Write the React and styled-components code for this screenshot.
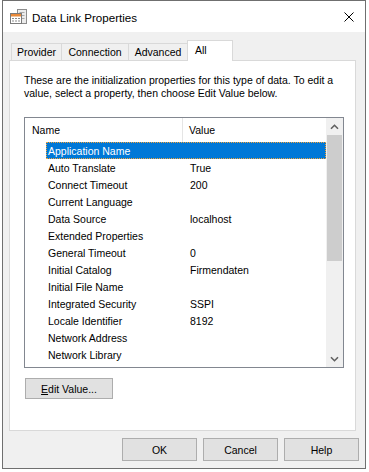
import styled, { createGlobalStyle } from "styled-components"

const GlobalStyle = createGlobalStyle`
    html, body {
        margin: 0;
        padding: 0;
        background: #ffffff;
    }
    body {
        font-family: "Liberation Sans", Arial, sans-serif;
        font-size: 10.5px;
        color: #000000;
    }
`

const Window = styled.div`
    margin-left: 2px;
    width: 364px;
    height: 469px;
    box-sizing: border-box;
    border: 1px solid #6f6f6f;
    display: flex;
    flex-direction: column;
`
const TitleBar = styled.div`
    height: 31px;
    flex: none;
    background: #ffffff;
    display: flex;
    align-items: center;
    gap: 4px;
    padding: 0 11px 0 7px;
`
const Title = styled.div`
    flex: 1;
    font-size: 11.6px;
    padding-top: 1px;
`
const Content = styled.div`
    flex: 1;
    background: #f0f0f0;
    padding: 8px 0 0 6px;
    display: flex;
    flex-direction: column;
`
const TabStrip = styled.div`
    display: flex;
    align-items: flex-end;
    height: 20px;
    padding-left: 2px;
`
const Tab = styled.div`
    position: relative;
    box-sizing: border-box;
    width: ${(p) => p.$width}px;
    height: ${(p) => (p.$selected ? 21 : 17)}px;
    margin-left: ${(p) => (p.$first ? 0 : -1)}px;
    margin-bottom: ${(p) => (p.$selected ? -1 : 0)}px;
    border: 1px solid #d9d9d9;
    border-bottom: none;
    background: ${(p) => (p.$selected ? "#ffffff" : "#f0f0f0")};
    z-index: ${(p) => (p.$selected ? 1 : 0)};
    text-align: ${(p) => (p.$selected ? "left" : "center")};
    padding: ${(p) => (p.$selected ? "2px 0 0 7px" : "1px 0 0 0")};
    line-height: 15px;
    white-space: nowrap;
`
const Panel = styled.div`
    width: 347px;
    height: 371px;
    box-sizing: border-box;
    border: 1px solid #d9d9d9;
    background: #ffffff;
    padding: 13px 0 0 14px;
    display: flex;
    flex-direction: column;
`
const Description = styled.div`
    line-height: 13px;
    white-space: nowrap;
`
const ListBox = styled.div`
    margin-top: 17px;
    width: 320px;
    height: 251px;
    box-sizing: border-box;
    border: 1px solid #828790;
    display: flex;
`
const ListBody = styled.div`
    width: 301px;
    display: flex;
    flex-direction: column;
`
const Header = styled.div`
    height: 24px;
    display: flex;
    align-items: stretch;
`
const HeaderCell = styled.div`
    display: flex;
    align-items: center;
    box-sizing: border-box;
    width: ${(p) => (p.$width ? `${p.$width}px` : "auto")};
    flex: ${(p) => (p.$width ? "none" : "1")};
    padding-left: ${(p) => p.$pad}px;
    border-right: ${(p) => (p.$divider ? "1px solid #e5e5e5" : "none")};
`
const Row = styled.div`
    height: 17px;
    margin-left: 21px;
    padding: 1px 0 0 2px;
    box-sizing: border-box;
    display: flex;
    align-items: center;
    background: ${(p) => (p.$selected ? "#0078d7" : "transparent")};
    color: ${(p) => (p.$selected ? "#ffffff" : "#000000")};
    outline: ${(p) => (p.$selected ? "1px dotted #f2a43a" : "none")};
    outline-offset: -1px;
`
const NameCell = styled.div`
    width: 142px;
    flex: none;
    white-space: nowrap;
`
const ValueCell = styled.div`
    white-space: nowrap;
`
const ScrollBar = styled.div`
    width: 17px;
    background: #f0f0f0;
    display: flex;
    flex-direction: column;
`
const ScrollArrow = styled.div`
    height: 17px;
    display: flex;
    align-items: center;
    justify-content: center;
`
const Thumb = styled.div`
    margin-left: 1px;
    width: 15px;
    height: 126px;
    background: #cdcdcd;
`
const Spacer = styled.div`
    flex: 1;
`
const Button = styled.button`
    box-sizing: border-box;
    width: ${(p) => p.$width}px;
    height: ${(p) => p.$height}px;
    border: 1px solid #adadad;
    background: #e1e1e1;
    font-family: "Liberation Sans", Arial, sans-serif;
    font-size: 10.5px;
    color: #000000;
    padding: 1px 0 0 0;
`
const EditButton = styled(Button)`
    margin-top: 10px;
    margin-left: 1px;
`
const Footer = styled.div`
    margin-top: 7px;
    display: flex;
    justify-content: flex-end;
    gap: 6px;
    padding-right: 6px;
`

const rows = [
    ["Application Name", ""],
    ["Auto Translate", "True"],
    ["Connect Timeout", "200"],
    ["Current Language", ""],
    ["Data Source", "localhost"],
    ["Extended Properties", ""],
    ["General Timeout", "0"],
    ["Initial Catalog", "Firmendaten"],
    ["Initial File Name", ""],
    ["Integrated Security", "SSPI"],
    ["Locale Identifier", "8192"],
    ["Network Address", ""],
    ["Network Library", ""],
]

function AppIcon() {
    return (
        <svg width="18" height="16" viewBox="0 0 18 16">
            <rect x="7.5" y="0.5" width="9" height="14" fill="#ececec" stroke="#8c8c8c" />
            <line x1="9.5" y1="3.5" x2="14.5" y2="3.5" stroke="#a8a8a8" />
            <line x1="9.5" y1="6.5" x2="14.5" y2="6.5" stroke="#a8a8a8" />
            <line x1="9.5" y1="9.5" x2="14.5" y2="9.5" stroke="#a8a8a8" />
            <rect x="0.5" y="4.5" width="11" height="10" fill="#ffffff" stroke="#7a7a7a" />
            <rect x="1" y="5" width="10" height="2.5" fill="#e8893a" />
            <rect x="2" y="9" width="2" height="1" fill="#8a8a8a" />
            <rect x="5" y="9" width="2" height="1" fill="#8a8a8a" />
            <rect x="8" y="9" width="2" height="1" fill="#8a8a8a" />
            <rect x="2" y="11.5" width="2" height="1" fill="#8a8a8a" />
            <rect x="5" y="11.5" width="2" height="1" fill="#8a8a8a" />
            <rect x="8" y="11.5" width="2" height="1" fill="#8a8a8a" />
        </svg>
    )
}

function CloseIcon() {
    return (
        <svg width="10" height="10" viewBox="0 0 10 10">
            <path d="M0.5 0.5 L9.5 9.5 M9.5 0.5 L0.5 9.5" stroke="#000000" strokeWidth="1" fill="none" />
        </svg>
    )
}

function Chevron({ down }) {
    return (
        <svg width="9" height="6" viewBox="0 0 9 6">
            <path
                d={down ? "M1 1.2 L4.5 4.7 L8 1.2" : "M1 4.8 L4.5 1.3 L8 4.8"}
                stroke="#606060"
                strokeWidth="1.6"
                fill="none"
            />
        </svg>
    )
}

function App() {
    return (
        <>
            <GlobalStyle />
            <Window>
                <TitleBar>
                    <AppIcon />
                    <Title>Data Link Properties</Title>
                    <CloseIcon />
                </TitleBar>
                <Content>
                    <TabStrip>
                        <Tab $first $width={51}>Provider</Tab>
                        <Tab $width={68}>Connection</Tab>
                        <Tab $width={60}>Advanced</Tab>
                        <Tab $width={46} $selected>All</Tab>
                    </TabStrip>
                    <Panel>
                        <Description>
                            These are the initialization properties for this type of data. To edit a
                            <br />
                            value, select a property, then choose Edit Value below.
                        </Description>
                        <ListBox>
                            <ListBody>
                                <Header>
                                    <HeaderCell $width={158} $pad={7} $divider>Name</HeaderCell>
                                    <HeaderCell $pad={6}>Value</HeaderCell>
                                </Header>
                                {rows.map(([name, value], i) => (
                                    <Row key={name} $selected={i === 0}>
                                        <NameCell>{name}</NameCell>
                                        <ValueCell>{value}</ValueCell>
                                    </Row>
                                ))}
                            </ListBody>
                            <ScrollBar>
                                <ScrollArrow><Chevron /></ScrollArrow>
                                <Thumb />
                                <Spacer />
                                <ScrollArrow><Chevron down /></ScrollArrow>
                            </ScrollBar>
                        </ListBox>
                        <EditButton $width={88} $height={21}>
                            <u>E</u>dit Value...
                        </EditButton>
                    </Panel>
                    <Footer>
                        <Button $width={75} $height={23}>OK</Button>
                        <Button $width={75} $height={23}>Cancel</Button>
                        <Button $width={75} $height={23}>Help</Button>
                    </Footer>
                </Content>
            </Window>
        </>
    )
}

export default App
